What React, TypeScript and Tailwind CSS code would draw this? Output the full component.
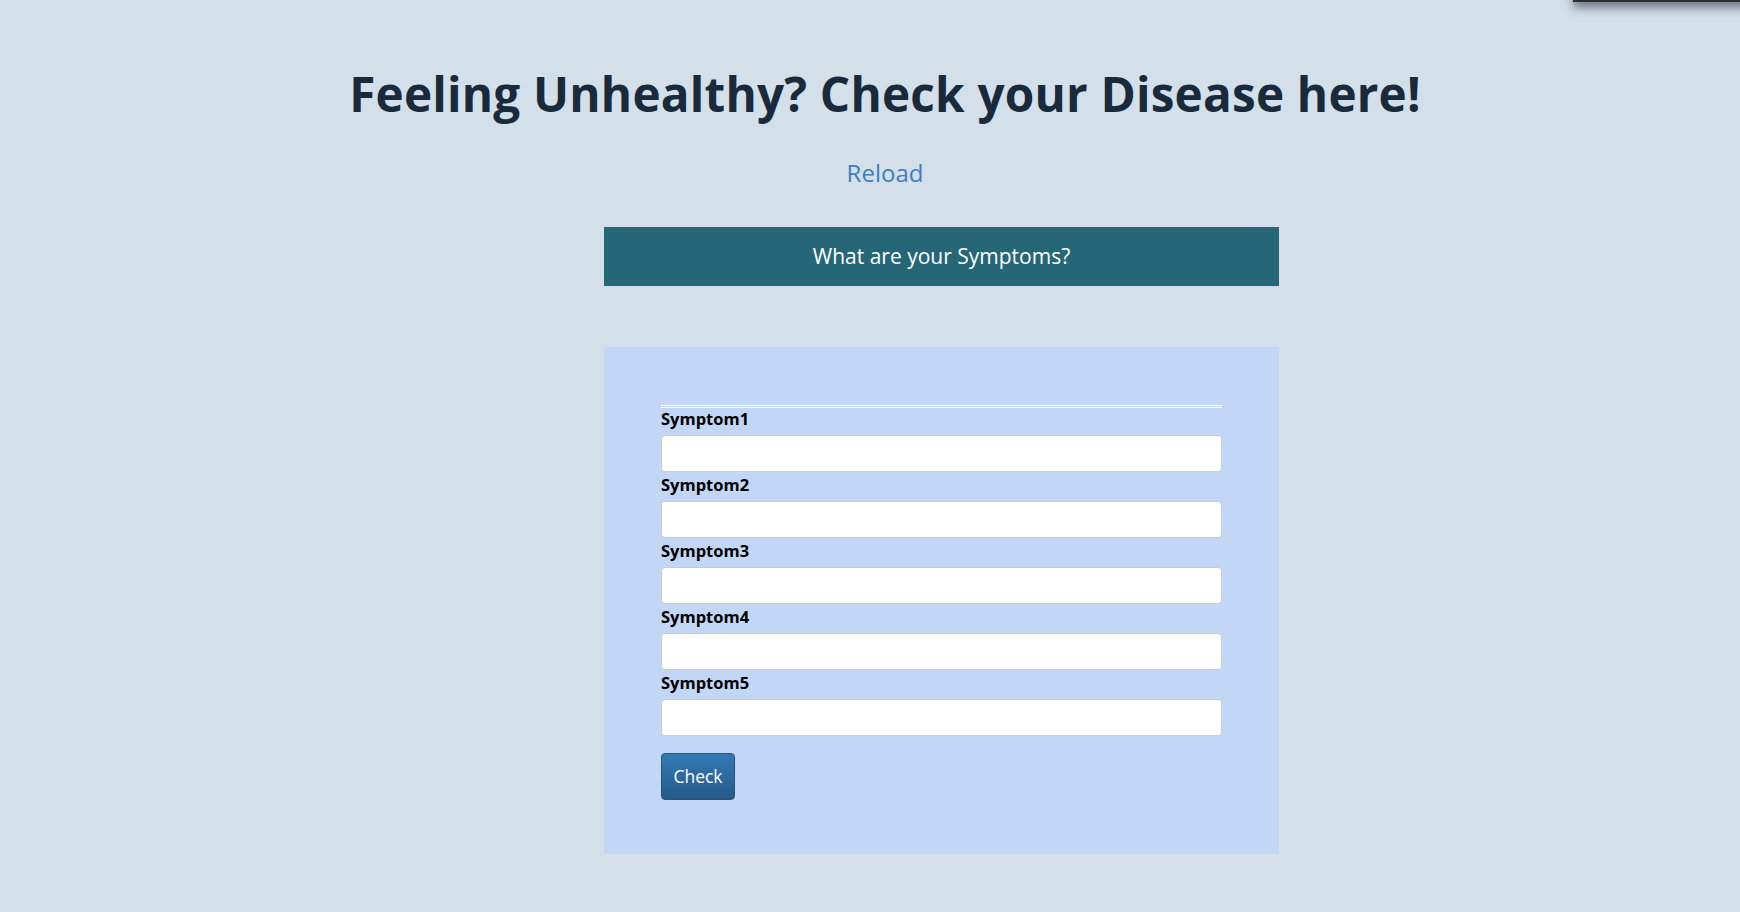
import React from "react";

const font = { fontFamily: '"Open Sans", "Liberation Sans", sans-serif' };

export default function App() {
  const fields = ["Symptom1", "Symptom2", "Symptom3", "Symptom4", "Symptom5"];
  return (
    <div className="relative min-h-[912px] w-full bg-[#d3e0ea] overflow-hidden" style={font}>
      <div className="absolute top-[-20px] left-[1573px] w-[200px] h-[22px] bg-[#2e2e2e] shadow-[0_6px_10px_rgba(40,40,50,0.55)]" />
      <div className="pl-[30px] pt-[64px] flex flex-col items-center">
        <h1 className="text-[47.7px] leading-[60px] font-bold text-[#182a3b] tracking-[0.2px]">
          Feeling Unhealthy? Check your Disease here!
        </h1>
        <a className="mt-[33px] text-[24px] leading-[32px] text-[#3f7dbf] cursor-pointer">Reload</a>
      </div>
      <div className="ml-[604px] w-[675px] mt-[38px]">
        <div className="h-[59px] bg-[#256677] flex items-center justify-center text-white text-[21px]">
          What are your Symptoms?
        </div>
        <div className="mt-[61px] bg-[#c2d6f5] px-[57px] pt-[58px] pb-[54px]">
          <div className="h-[3px] border-t border-b border-white" />
          <div className="mt-[-2px] flex flex-col">
            {fields.map((f) => (
              <div key={f} className="flex flex-col">
                <label className="h-[22px] leading-[26px] text-[16.5px] font-bold text-black">{f}</label>
                <input className="mt-[7px] h-[37px] rounded-[4px] border border-[#cccccc] bg-white" />
              </div>
            ))}
          </div>
          <button className="mt-[17px] w-[74px] h-[47px] rounded-[4px] border border-[#245580] bg-gradient-to-b from-[#337ab7] to-[#265a88] text-white text-[17.5px]">
            Check
          </button>
        </div>
      </div>
    </div>
  );
}
